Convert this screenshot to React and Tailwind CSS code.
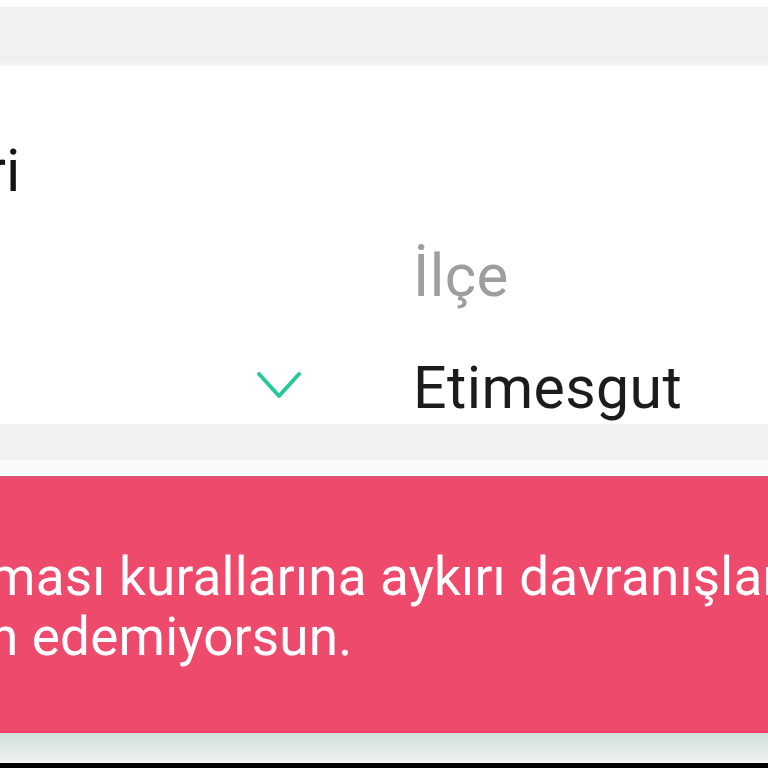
export default function App() {
  return (
    <div className="h-[768px] w-[768px] overflow-hidden bg-white font-['Roboto',sans-serif]">
      {/* top strip */}
      <div className="h-[7px] bg-white" />
      <div className="h-[50px] bg-[#f1f1f1]" />
      <div className="h-[9px] bg-gradient-to-b from-[#ececec] to-[#f7f7f7]" />

      {/* address card */}
      <section className="h-[358px] bg-white pt-[75px]">
        <h2 className="-ml-[14px] whitespace-nowrap text-[59px] leading-none text-[#141414]">
          ri
        </h2>

        <div className="mt-[46px] flex">
          <div className="flex w-[300px] flex-col">
            <div className="h-[60px]" />
            <div className="mt-[52px] flex h-[59px] items-center justify-end">
              <svg width="44" height="28" viewBox="0 0 44 28" className="mt-[-6px] mr-[-1px]">
                <polyline
                  points="2,3 22,25 42,3"
                  fill="none"
                  stroke="#27c99a"
                  strokeWidth="4"
                  strokeLinecap="round"
                  strokeLinejoin="round"
                />
              </svg>
            </div>
          </div>

          <div className="ml-[113px] flex flex-col">
            <span className="text-[60px] leading-none tracking-[0.4px] text-[#9e9e9e]">İlçe</span>
            <span className="mt-[52px] text-[59px] leading-none tracking-[0.4px] text-[#1c1c1c]">
              Etimesgut
            </span>
          </div>
        </div>
      </section>

      {/* gap */}
      <div className="h-[36px] bg-[#f1f1f1]" />
      <div className="h-[16px] bg-gradient-to-b from-[#fdf7f8] to-[#f6fffb]" />

      {/* warning banner */}
      <div className="h-[257px] border-t-2 border-b-2 border-t-[#dd5570] border-b-[#f13b66] bg-[#ee4a6c] pt-[69px]">
        <p className="-ml-[11px] whitespace-nowrap text-[53px] leading-[60px] tracking-[0.2px] text-white">
          ması kurallarına aykırı davranışların
          <br />
          n edemiyorsun.
        </p>
      </div>

      {/* bottom shadow + nav */}
      <div className="h-[28px] bg-gradient-to-b from-[#cfe2d9] to-[#efefef]" />
      <div className="h-[2px] bg-[#f5f5f5]" />
      <div className="h-[20px] bg-black" />
    </div>
  )
}
